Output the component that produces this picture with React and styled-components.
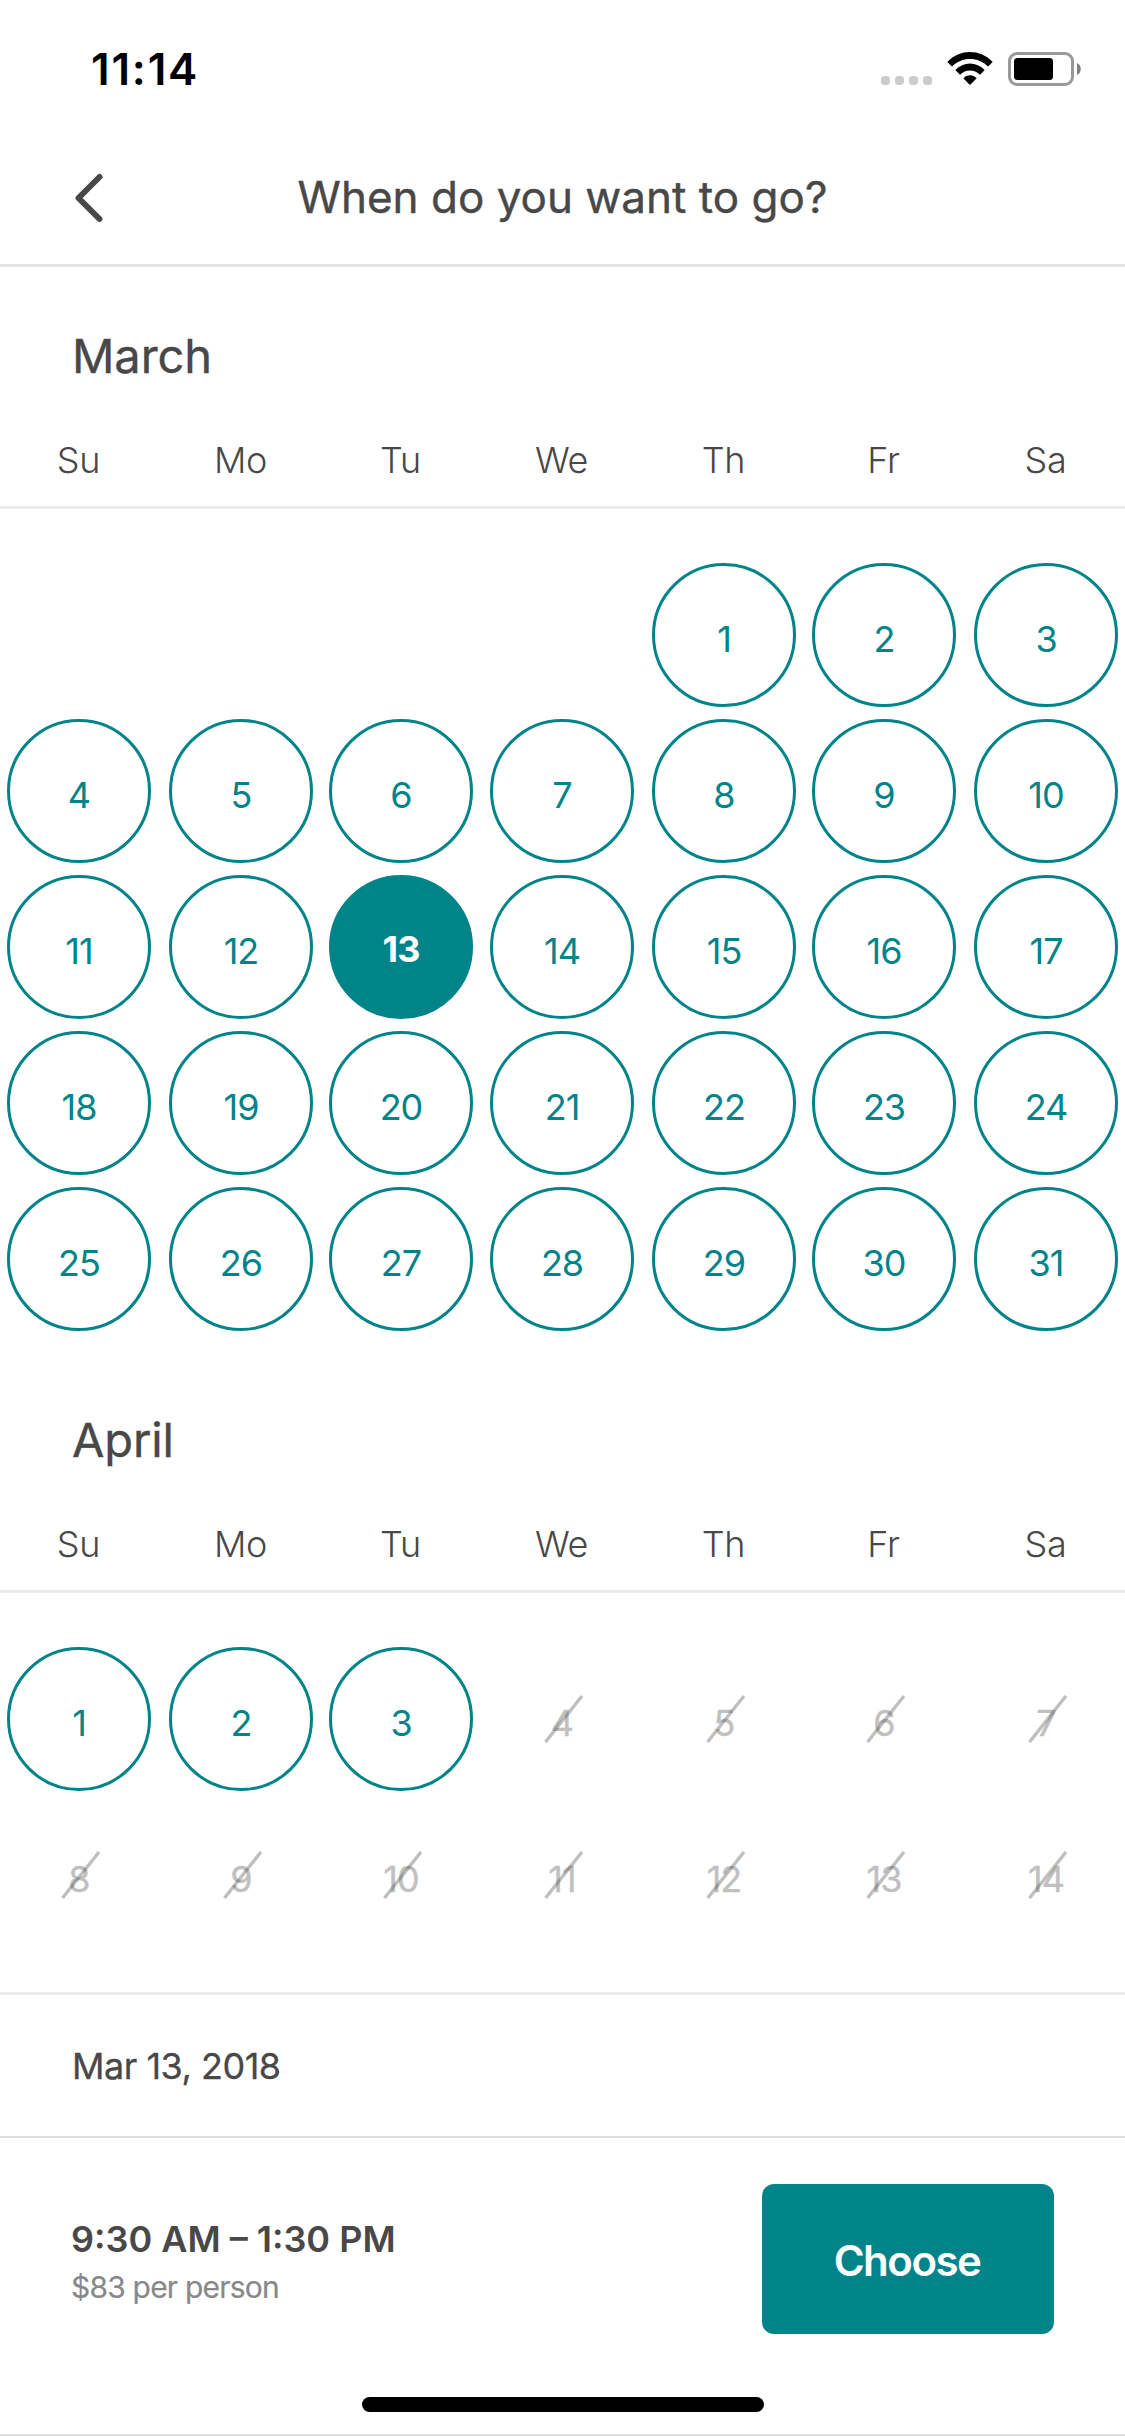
import styled, { createGlobalStyle } from "styled-components";

const GlobalStyle = createGlobalStyle`
    * {
        box-sizing: border-box;
    }

    body {
        margin: 0;
        background: #fff;
        color: #484848;
        font-family: Inter, "Liberation Sans", sans-serif;
    }
`;

const Screen = styled.div`
    width: 1125px;
    height: 2436px;
    display: flex;
    flex-direction: column;
    overflow: hidden;
    border-bottom: 2px solid #e0e0e0;
`;

const StatusBar = styled.div`
    height: 132px;
    padding: 48px 44px 0 91px;
    display: flex;
    justify-content: space-between;
    align-items: flex-start;
    color: #000;

    svg {
        margin-top: 4px;
    }
`;

const Clock = styled.span`
    font-size: 44px;
    line-height: 42px;
    font-weight: 600;
    letter-spacing: 1.8px;
`;

const Header = styled.header`
    height: 135px;
    padding: 0 75px;
    display: grid;
    grid-template-columns: 28px 1fr 28px;
    align-items: center;
    border-bottom: 3px solid #e4e4e4;
`;

const Title = styled.h1`
    margin: 0;
    padding-bottom: 2px;
    font-size: 44px;
    line-height: 52px;
    font-weight: 400;
    text-align: center;
    white-space: nowrap;
    -webkit-text-stroke: 0.4px;
`;

const Calendar = styled.main`
    height: 1728px;
    border-bottom: 3px solid #ebebeb;
    overflow: hidden;
`;

const MonthBlock = styled.section`
    height: 1084px;
`;

const MonthName = styled.h2`
    margin: 0;
    padding: 60px 72px 0;
    height: 157px;
    font-size: 47px;
    line-height: 58px;
    font-weight: 400;
    letter-spacing: -0.1px;
    -webkit-text-stroke: 0.4px;
`;

const Week = styled.div`
    display: grid;
    grid-template-columns: 162px 160px 161px 162px 160px 162px 158px;
`;

const Weekdays = styled(Week)`
    height: 85px;
    padding-top: 14px;
    border-bottom: 3px solid #ebebeb;
`;

const Weekday = styled.span`
    width: 157px;
    font-size: 36px;
    line-height: 44px;
    font-weight: 300;
    letter-spacing: -0.3px;
    text-align: center;
`;

const Days = styled(Week)`
    padding-top: 54px;
    row-gap: 12px;
`;

const Day = styled.div`
    position: relative;
    grid-column-start: ${props => props.$column || "auto"};
    width: 144px;
    height: 144px;
    margin-left: 7px;
    padding-top: ${props => props.$selected ? "4px" : "7px"};
    display: flex;
    justify-content: center;
    align-items: center;
    border: 3px solid ${props => props.$disabled ? "transparent" : "#008489"};
    border-radius: 50%;
    background: ${props => props.$selected ? "#008489" : "transparent"};
    color: ${props => props.$selected ? "#fff" : props.$disabled ? "#c0c0c0" : "#008489"};
    font-size: 36px;
    font-weight: ${props => props.$selected ? 700 : 400};
    letter-spacing: -1px;
    -webkit-text-stroke: ${props => props.$disabled ? "0.3px" : "0"};
`;

const Slash = styled.svg`
    position: absolute;
    top: 45px;
    left: 51px;
`;

const DateRow = styled.div`
    height: 143px;
    padding: 0 72px;
    display: flex;
    align-items: center;
    border-bottom: 2px solid #e0e0e0;
    font-size: 36px;
    font-weight: 400;
    letter-spacing: -0.5px;
    -webkit-text-stroke: 0.3px;
`;

const Footer = styled.footer`
    height: 259px;
    padding: 46px 71px 0;
    display: flex;
    justify-content: space-between;
    align-items: flex-start;
`;

const Slot = styled.div`
    padding-top: 32px;
    display: flex;
    flex-direction: column;
    gap: 5px;
`;

const SlotTime = styled.strong`
    font-size: 36px;
    line-height: 46px;
    font-weight: 600;
`;

const SlotPrice = styled.span`
    font-size: 30px;
    line-height: 40px;
    letter-spacing: -0.8px;
    color: #888;
    -webkit-text-stroke: 0.2px;
`;

const ChooseButton = styled.button`
    width: 292px;
    height: 150px;
    padding: 2px 2px 0 0;
    border: 0;
    border-radius: 12px;
    background: #008489;
    color: #fff;
    font-family: inherit;
    font-size: 42px;
    font-weight: 600;
    letter-spacing: -1.5px;
`;

const HomeIndicator = styled.div`
    width: 402px;
    height: 15px;
    margin-left: 362px;
    border-radius: 8px;
    background: #000;
`;

const weekdays = ["Su", "Mo", "Tu", "We", "Th", "Fr", "Sa"];

function StatusIcons() {
    return <svg width="200" height="34" viewBox="881 52 200 34">
        {
            [881, 895, 909, 923].map(x => <rect key={x} x={x} y="76" width="9" height="9" rx="3.5" fill="#ccc" />)
        }
        <path d="M947.3 62C959.5 48.7 980.5 48.7 992.7 62L988 66.6C978.4 56.5 961.6 56.5 952 66.6Z" />
        <path d="M955.3 70C963.3 61.3 976.7 61.3 984.7 70L980 74.7C974.4 69 965.6 69 960 74.7Z" />
        <path d="M963.3 78.3C967 74.2 973 74.2 976.7 78.3L970 85Z" />
        <rect x="1009.5" y="53.5" width="63" height="31" rx="7.5" fill="none" stroke="#999" strokeWidth="3" />
        <rect x="1014" y="58" width="39" height="22" rx="3.5" />
        <path d="M1077 63C1082 65 1082 73 1077 75Z" fill="#808080" />
    </svg>
}

function Month(props) {
    const { name, days, offset=0, selected, disabledFrom=Infinity } = props;
    return <MonthBlock>
        <MonthName>{name}</MonthName>
        <Weekdays>
            {weekdays.map(day => <Weekday key={day}>{day}</Weekday>)}
        </Weekdays>
        <Days>
            {
                Array.from({ length: days }, (_, i) => i + 1).map(day => {
                    const disabled = day >= disabledFrom;
                    return <Day
                        key={day}
                        $column={day === 1 ? offset + 1 : undefined}
                        $selected={day === selected}
                        $disabled={disabled}
                    >
                        {day}
                        {
                            disabled &&
                            <Slash width="40" height="48" viewBox="0 0 40 48">
                                <path d="M1.5 47L38 1" stroke="#484848" strokeOpacity=".35" strokeWidth="3.4" />
                            </Slash>
                        }
                    </Day>
                })
            }
        </Days>
    </MonthBlock>
}

export default function App() {
    return <Screen>
        <GlobalStyle />
        <StatusBar>
            <Clock>11:14</Clock>
            <StatusIcons />
        </StatusBar>
        <Header>
            <svg width="28" height="50" viewBox="0 0 28 50" fill="none" stroke="#484848" strokeWidth="6" strokeLinecap="round" strokeLinejoin="round">
                <path d="M24.5 4L3.5 25L24.5 46" />
            </svg>
            <Title>When do you want to go?</Title>
        </Header>
        <Calendar>
            <Month name="March" days={31} offset={4} selected={13} />
            <Month name="April" days={14} disabledFrom={4} />
        </Calendar>
        <DateRow>Mar 13, 2018</DateRow>
        <Footer>
            <Slot>
                <SlotTime>9:30 AM – 1:30 PM</SlotTime>
                <SlotPrice>$83 per person</SlotPrice>
            </Slot>
            <ChooseButton>Choose</ChooseButton>
        </Footer>
        <HomeIndicator />
    </Screen>
}
